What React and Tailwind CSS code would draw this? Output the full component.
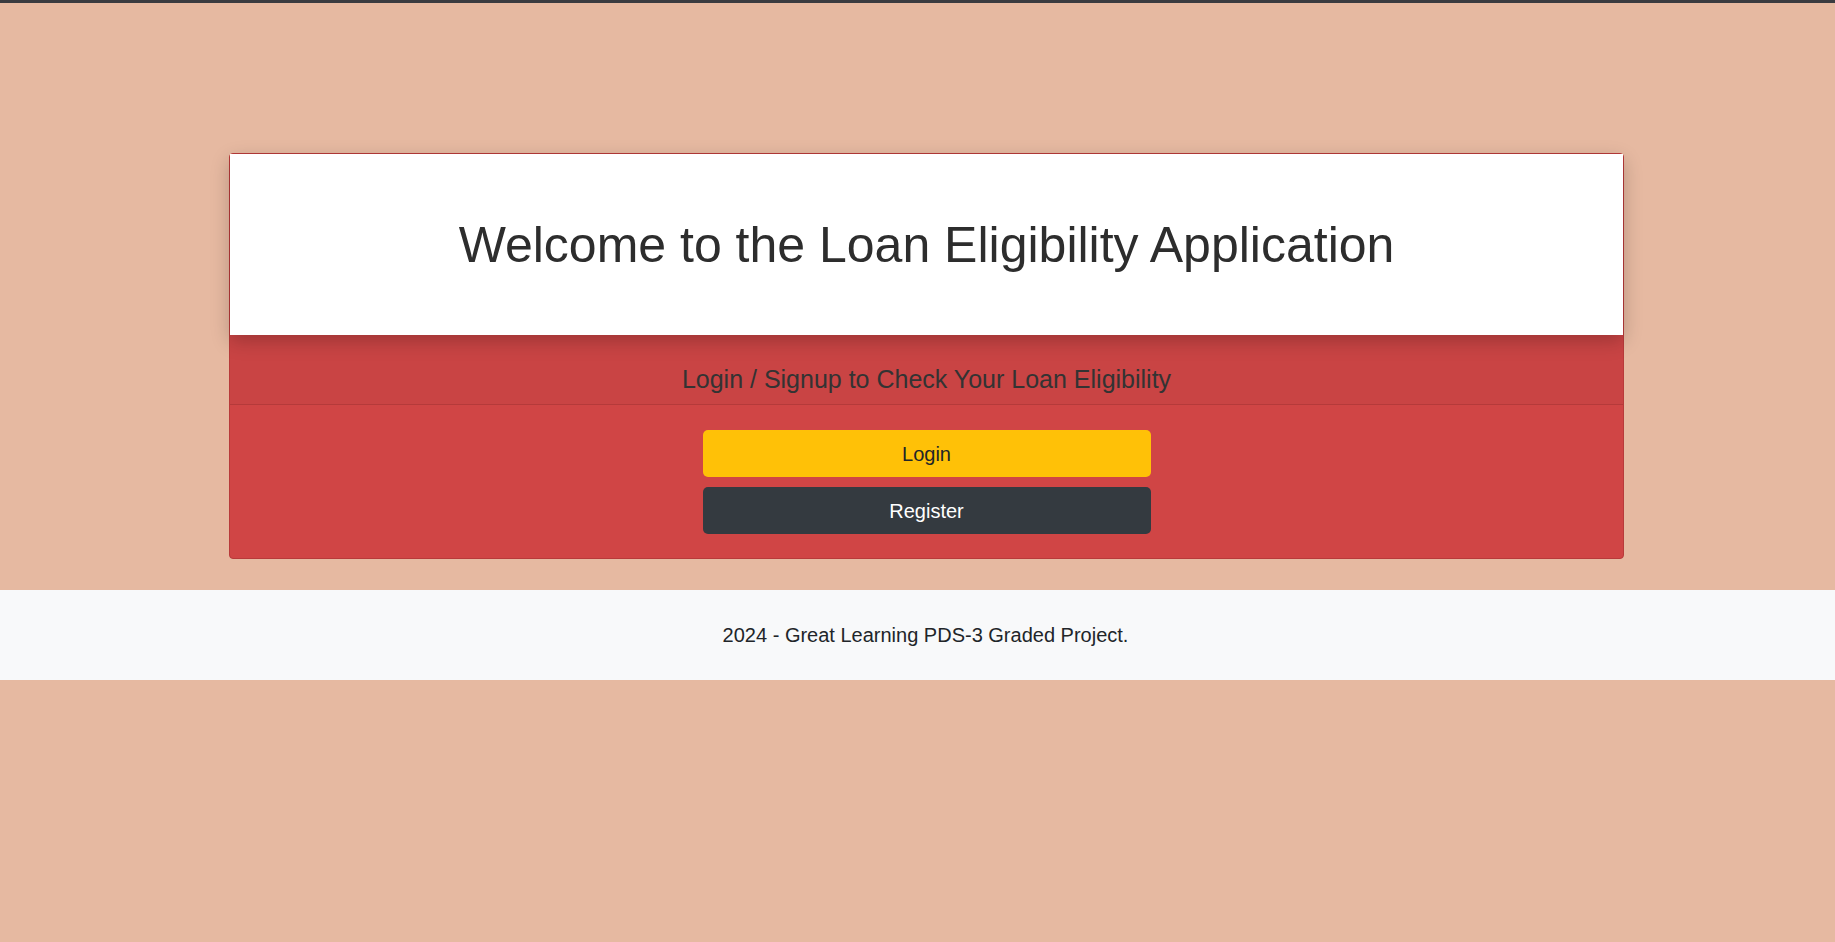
import React from "react";

const App = () => {
  return (
    <div className="min-h-screen bg-[#e6b9a1] border-t-[3px] border-[#3a3b40] font-['Liberation_Sans',Arial,sans-serif]">
      <div className="pt-[150px]">
        <div className="ml-[229px] w-[1395px] rounded-[4px] border border-[#b83a3a] bg-[#d04545]">
          <div className="relative z-10 h-[181px] bg-white flex items-center justify-center shadow-[0_6px_18px_rgba(0,0,0,0.22)]">
            <h1 className="text-[50px] text-[#2d2d2d] leading-none">
              Welcome to the Loan Eligibility Application
            </h1>
          </div>

          <div className="h-[70px] pt-[20px] bg-[#c94444] border-b border-[#b53a3a] flex items-center justify-center">
            <h4 className="text-[25px] text-[#333]">
              Login / Signup to Check Your Loan Eligibility
            </h4>
          </div>

          <div className="flex flex-col items-center gap-[10px] pt-[25px] pb-[24px]">
            <button className="w-[448px] h-[47px] rounded-[5px] bg-[#ffc107] text-[20px] text-[#212529]">
              Login
            </button>
            <button className="w-[448px] h-[47px] rounded-[5px] bg-[#343a40] text-[20px] text-white">
              Register
            </button>
          </div>
        </div>
      </div>

      <footer className="mt-[31px] h-[90px] pl-[16px] bg-[#f8f9fa] flex items-center justify-center">
        <p className="text-[20px] text-[#212529]">
          2024 - Great Learning PDS-3 Graded Project.
        </p>
      </footer>
    </div>
  );
};

export default App;
